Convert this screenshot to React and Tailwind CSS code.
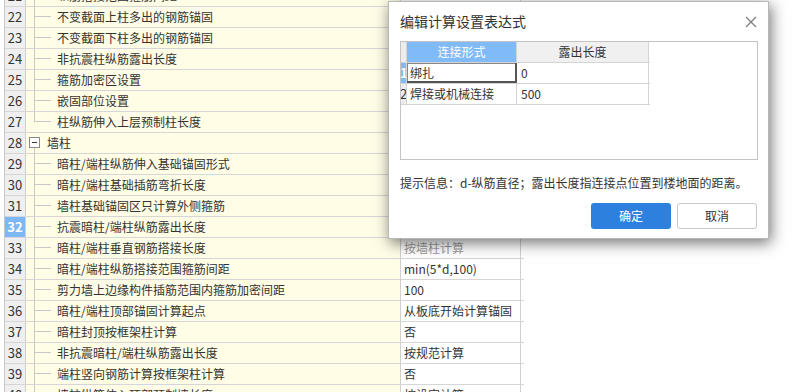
import React from 'react';

const rows = [
  { n: 21, t: '纵筋搭接范围箍筋间距', v: '', line: 'mid' },
  { n: 22, t: '不变截面上柱多出的钢筋锚固', v: '', line: 'mid' },
  { n: 23, t: '不变截面下柱多出的钢筋锚固', v: '', line: 'mid' },
  { n: 24, t: '非抗震柱纵筋露出长度', v: '', line: 'mid' },
  { n: 25, t: '箍筋加密区设置', v: '', line: 'mid' },
  { n: 26, t: '嵌固部位设置', v: '', line: 'mid' },
  { n: 27, t: '柱纵筋伸入上层预制柱长度', v: '', line: 'end' },
  { n: 28, t: '墙柱', v: '', group: true },
  { n: 29, t: '暗柱/端柱纵筋伸入基础锚固形式', v: '', line: 'mid' },
  { n: 30, t: '暗柱/端柱基础插筋弯折长度', v: '', line: 'mid' },
  { n: 31, t: '墙柱基础锚固区只计算外侧箍筋', v: '', line: 'mid' },
  { n: 32, t: '抗震暗柱/端柱纵筋露出长度', v: '', line: 'mid', sel: true },
  { n: 33, t: '暗柱/端柱垂直钢筋搭接长度', v: '按墙柱计算', line: 'mid', dim: true },
  { n: 34, t: '暗柱/端柱纵筋搭接范围箍筋间距', v: 'min(5*d,100)', line: 'mid' },
  { n: 35, t: '剪力墙上边缘构件插筋范围内箍筋加密间距', v: '100', line: 'mid' },
  { n: 36, t: '暗柱/端柱顶部锚固计算起点', v: '从板底开始计算锚固', line: 'mid' },
  { n: 37, t: '暗柱封顶按框架柱计算', v: '否', line: 'mid' },
  { n: 38, t: '非抗震暗柱/端柱纵筋露出长度', v: '按规范计算', line: 'mid' },
  { n: 39, t: '端柱竖向钢筋计算按框架柱计算', v: '否', line: 'mid' },
  { n: 40, t: '墙柱纵筋伸入顶部预制墙长度', v: '按设定计算', line: 'mid' },
];

const FONT = { fontFamily: '"Noto Sans CJK SC", "Microsoft YaHei", "Noto Sans", sans-serif' };

function TreeGlyph({ line, group }) {
  if (group) {
    return (
      <svg width="21" height="20" className="shrink-0">
        <line x1="8.5" y1="15" x2="8.5" y2="20" stroke="#c8c8c8" strokeWidth="1" />
        <rect x="3.5" y="4.5" width="10" height="10" fill="#fff" stroke="#8a8a8a" strokeWidth="1" />
        <line x1="6" y1="9.5" x2="11" y2="9.5" stroke="#333" strokeWidth="1" />
      </svg>
    );
  }
  return (
    <svg width="31" height="20" className="shrink-0">
      <line x1="8.5" y1="0" x2="8.5" y2={line === 'end' ? 10 : 20} stroke="#c8c8c8" strokeWidth="1" />
      <line x1="8.5" y1="9.5" x2="25" y2="9.5" stroke="#c8c8c8" strokeWidth="1" />
    </svg>
  );
}

export default function App() {
  return (
    <div className="relative w-[800px] h-[392px] overflow-hidden bg-white text-[#333]" style={FONT}>
      {/* main settings grid */}
      <div className="mt-[-14px] ml-[4px] w-[520px] border-l border-[#c8c8c8]">
        {rows.map((r) => (
          <div key={r.n} className="flex h-[21px] border-b border-[#d6d6d6]">
            <div
              className={
                'w-[21px] shrink-0 flex items-center justify-center text-[13px] border-r border-[#d0d0d0] ' +
                (r.sel ? 'bg-[#7db7f5] text-white font-bold' : 'bg-[#efefef] text-[#333]')
              }
            >
              {r.n}
            </div>
            <div className="w-[375px] shrink-0 flex items-center bg-[#fffde6] border-r border-[#d0d0d0] text-[12px] whitespace-nowrap overflow-hidden">
              <TreeGlyph line={r.line} group={r.group} />
              <span>{r.t}</span>
            </div>
            <div
              className={
                'w-[120px] shrink-0 flex items-center bg-white border-r border-[#d0d0d0] pl-[3px] text-[12px] whitespace-nowrap overflow-hidden ' +
                (r.dim ? 'text-[#9a9a9a]' : 'text-[#333]')
              }
            >
              {r.v}
            </div>
          </div>
        ))}
      </div>

      {/* dialog */}
      <div className="absolute left-[388px] top-[1px] w-[381px] h-[238px] bg-white border border-[#b8b8b8] shadow-[2px_4px_14px_rgba(0,0,0,0.55)] px-[11px]">
        <div className="h-[39px] flex items-center justify-between">
          <span className="text-[14px] text-[#333]">编辑计算设置表达式</span>
          <svg width="12" height="12" viewBox="0 0 12 12">
            <path d="M1 1 L11 11 M11 1 L1 11" stroke="#7a7a7a" strokeWidth="1.2" fill="none" />
          </svg>
        </div>
        <div className="w-[358px] h-[119px] border border-[#c4c4c4] bg-white">
          {/* header */}
          <div className="flex h-[21px] border-b border-[#d4d4d4] text-[12px] w-[249px]">
            <div className="w-[6px] bg-[#ececec] border-r border-[#d4d4d4]" />
            <div className="w-[110px] bg-[#80bbf8] text-white flex items-center justify-center border-r border-[#d4d4d4]">
              连接形式
            </div>
            <div className="w-[132px] bg-[#f0f0f0] text-[#333] flex items-center justify-center border-r border-[#d4d4d4]">
              露出长度
            </div>
          </div>
          <div className="flex h-[21px] border-b border-[#d4d4d4] text-[12px] w-[249px]">
            <div className="w-[6px] bg-[#80bbf8] text-white font-bold text-[13px] overflow-hidden flex items-center justify-start border-r border-[#d4d4d4]">
              <span className="ml-[-1px]">1</span>
            </div>
            <div className="w-[110px] flex items-center pl-[3px] shadow-[inset_-2px_-2px_0_#555,inset_1px_1px_0_#888]">
              绑扎
            </div>
            <div className="w-[132px] flex items-center pl-[4px] border-r border-[#d4d4d4]">0</div>
          </div>
          <div className="flex h-[21px] border-b border-[#d4d4d4] text-[12px] w-[249px]">
            <div className="w-[6px] bg-[#ececec] text-[13px] overflow-hidden flex items-center justify-start border-r border-[#d4d4d4]">
              <span className="ml-[-1px]">2</span>
            </div>
            <div className="w-[110px] flex items-center pl-[3px] border-r border-[#d4d4d4]">焊接或机械连接</div>
            <div className="w-[132px] flex items-center pl-[4px] border-r border-[#d4d4d4]">500</div>
          </div>
        </div>
        <div className="mt-[15px] text-[12px] leading-[16px] text-[#333] whitespace-nowrap">
          提示信息：d-纵筋直径；露出长度指连接点位置到楼地面的距离。
        </div>
        <div className="mt-[12px] flex justify-end gap-[6px]">
          <button className="w-[80px] h-[26px] rounded-[3px] bg-[#2e80df] text-white text-[12px]">确定</button>
          <button className="w-[80px] h-[26px] rounded-[3px] bg-white border border-[#c8c8c8] text-[#333] text-[12px]">取消</button>
        </div>
      </div>
    </div>
  );
}
